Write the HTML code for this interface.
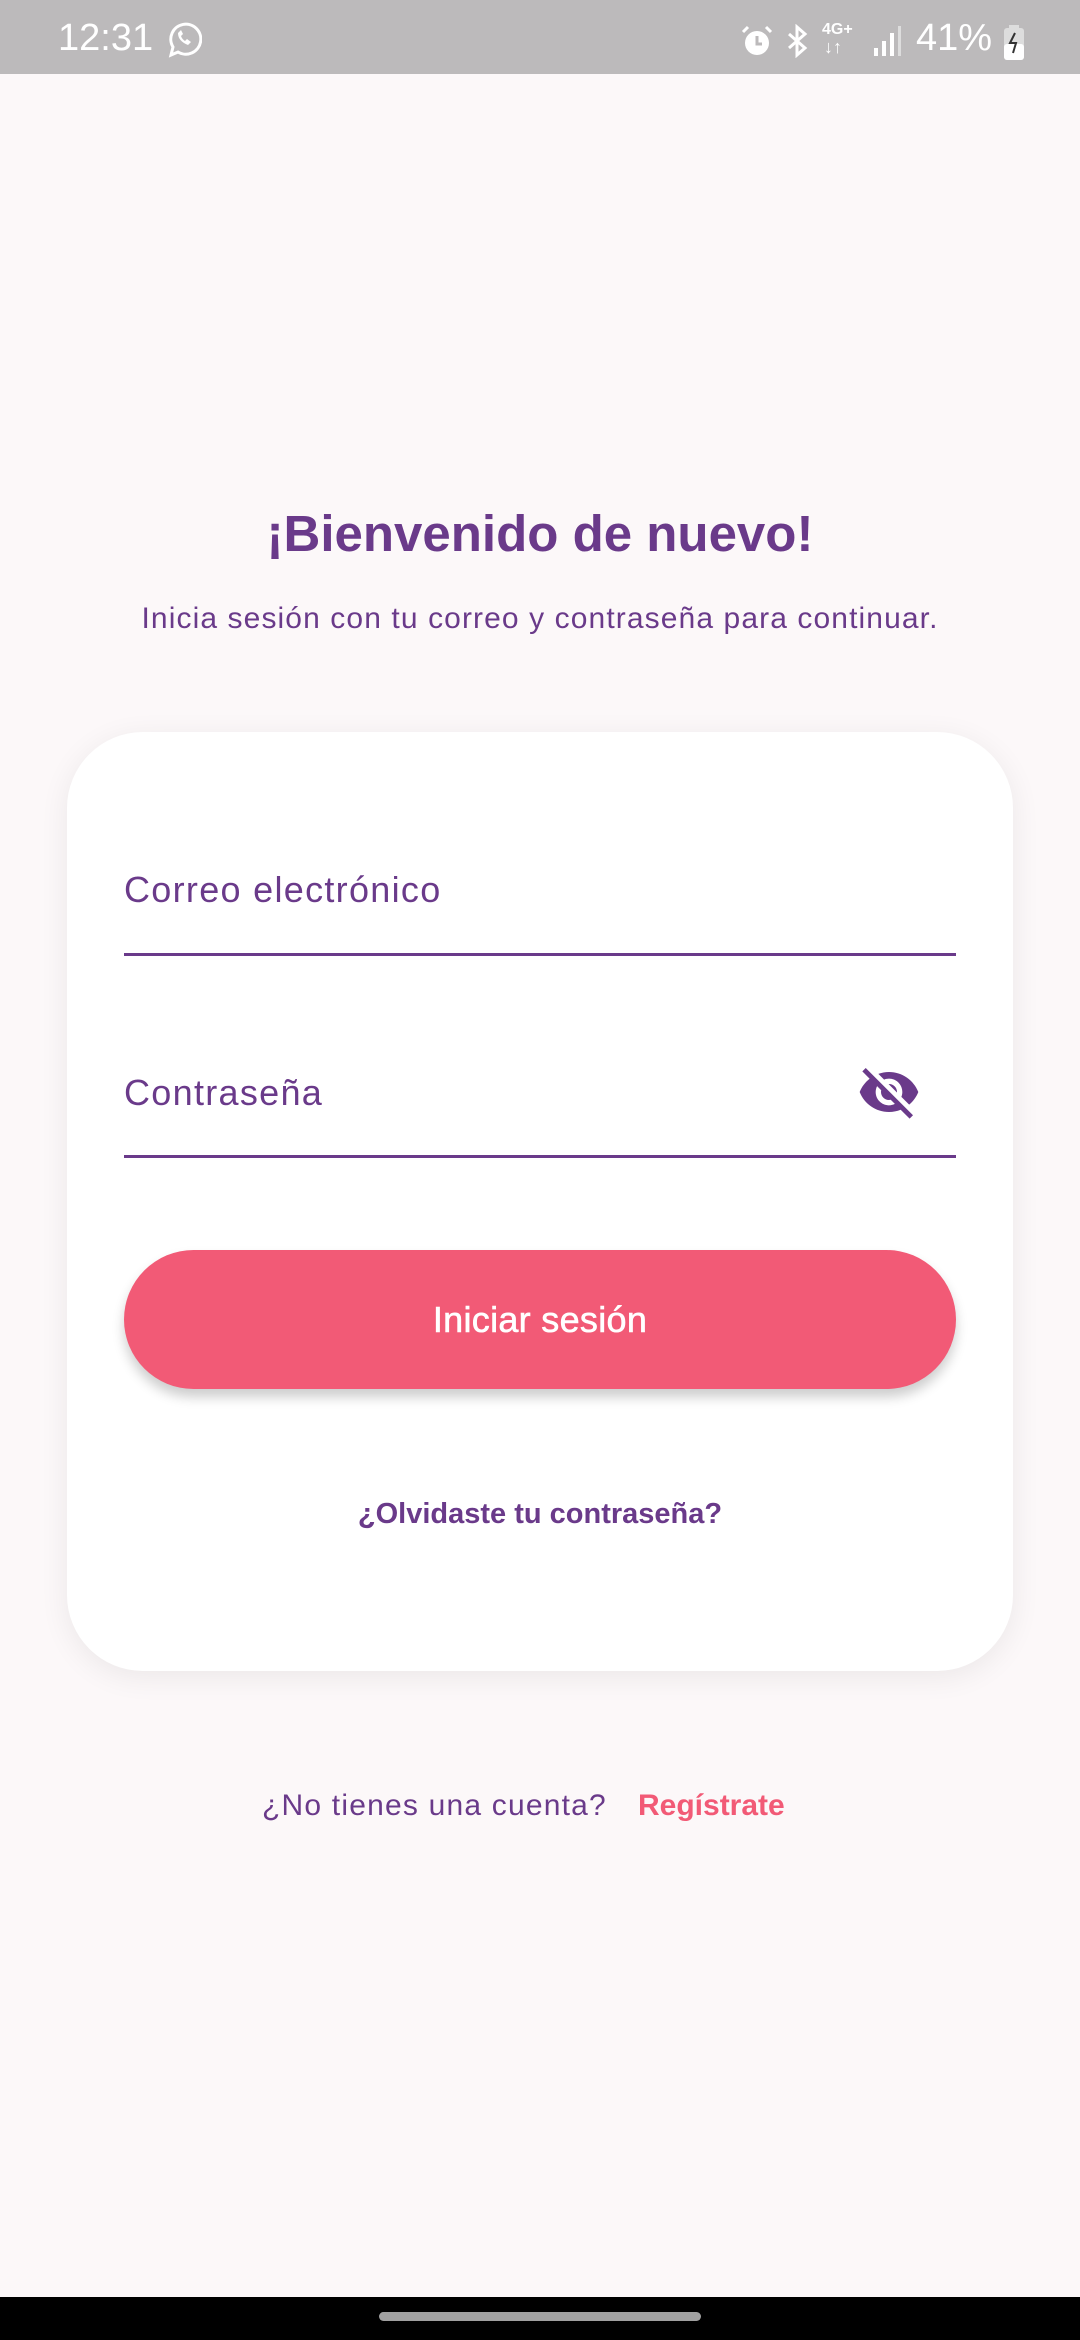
<!DOCTYPE html>
<html><head><meta charset="utf-8"><style>
*{margin:0;padding:0;box-sizing:border-box}
body{width:1080px;height:2340px;background:#fcf8f9;font-family:"Liberation Sans",Roboto,sans-serif;position:relative;overflow:hidden;color:#6a3a8a}
.sb{position:absolute;left:0;top:0;width:1080px;height:74px;background:#bcbabb;color:#fff}
.abs{position:absolute}
.c{position:absolute;left:0;width:1080px;text-align:center;white-space:nowrap}
.card{position:absolute;left:67px;top:732px;width:946px;height:939px;background:#fff;border-radius:76px;box-shadow:0 6px 30px rgba(0,0,0,0.07)}
.line{position:absolute;left:124px;width:832px;height:3px;background:#6a3a8a}
.lbl{position:absolute;left:124px;font-size:36px;letter-spacing:1.3px;line-height:40px;white-space:nowrap}
.btn{position:absolute;left:124px;top:1250px;width:832px;height:139px;border-radius:70px;background:#f25a76;box-shadow:0 8px 12px rgba(0,0,0,0.2);color:#fff;font-size:36px;text-align:center;line-height:139px;-webkit-text-stroke:0.6px #fff;letter-spacing:0.3px}
</style></head><body>
<div class="sb">
<div class="abs" style="left:58px;top:18px;font-size:38px;line-height:40px">12:31</div>
<svg class="abs" style="left:166px;top:21px" width="36" height="38" viewBox="0 0 36 38"><path d="M5 34 L7 26 A15 15 0 1 1 12 31 Z" fill="none" stroke="#fff" stroke-width="3"/><path d="M12 12 q0 8 10 12 l3-3 -4-3 -2 2 q-3-2-4-5 l2-2 -2-4z" fill="#fff"/></svg>
<svg class="abs" style="left:740px;top:24px" width="34" height="34" viewBox="0 0 34 34"><circle cx="17" cy="19" r="12" fill="#fff"/><path d="M17 12v8h5" stroke="#bcbabb" stroke-width="3" fill="none"/><path d="M3 8l5-5M31 8l-5-5" stroke="#fff" stroke-width="3"/></svg>
<svg class="abs" style="left:784px;top:24px" width="26" height="34" viewBox="0 0 26 34"><path d="M5 10l16 14-8 7V3l8 7-16 14" stroke="#fff" stroke-width="3" fill="none"/></svg>
<div class="abs" style="left:822px;top:22px;font-size:16px;line-height:16px;font-weight:bold">4G+</div>
<div class="abs" style="left:824px;top:38px;font-size:18px;line-height:18px">↓↑</div>
<svg class="abs" style="left:872px;top:24px" width="30" height="34" viewBox="0 0 30 34"><rect x="2" y="24" width="4" height="8" fill="#fff"/><rect x="10" y="17" width="4" height="15" fill="#fff"/><rect x="18" y="9" width="4" height="23" fill="#fff"/><rect x="26" y="2" width="3" height="30" fill="#ddd"/></svg>
<div class="abs" style="left:916px;top:18px;font-size:38px;line-height:40px">41%</div>
<svg class="abs" style="left:1002px;top:24px" width="24" height="36" viewBox="0 0 24 36"><rect x="7" y="1" width="10" height="4" fill="#ddd"/><rect x="2" y="4" width="20" height="32" rx="3" fill="#ddd"/><rect x="2" y="20" width="20" height="16" rx="3" fill="#fff"/><path d="M13 9l-5 10h6l-3 10" stroke="#333" stroke-width="2" fill="none"/></svg>
</div>

<div class="c" style="top:504px;font-size:51px;font-weight:bold;line-height:60px">¡Bienvenido de nuevo!</div>
<div class="c" style="top:601px;font-size:30px;line-height:36px;letter-spacing:1.1px">Inicia sesión con tu correo y contraseña para continuar.</div>

<div class="card"></div>
<div class="lbl" style="top:870px">Correo electrónico</div>
<div class="line" style="top:953px"></div>
<div class="lbl" style="top:1073px">Contraseña</div>
<svg class="abs" style="left:854px;top:1060px" width="70" height="64" viewBox="0 0 24 24"><path fill="#6a3a8a" d="M12 7c2.76 0 5 2.240 5 5 0 .65-.13 1.26-.36 1.83l2.92 2.92c1.51-1.26 2.7-2.89 3.430-4.75-1.730-4.39-6-7.5-11-7.5-1.4 0-2.74.25-3.98.7l2.16 2.16C10.74 7.13 11.35 7 12 7zM2 4.27l2.28 2.28.46.46C3.08 8.3 1.78 10.02 1 12c1.73 4.39 6 7.5 11 7.5 1.55 0 3.03-.3 4.38-.84l.42.42L19.73 22 21 20.73 3.27 3 2 4.27zM7.53 9.8l1.55 1.55c-.05.21-.08.43-.08.65 0 1.66 1.34 3 3 3 .22 0 .44-.03.65-.08l1.55 1.55c-.67.33-1.41.53-2.2.53-2.76 0-5-2.24-5-5 0-.79.2-1.53.53-2.2zm4.31-.78l3.15 3.150.02-.16c0-1.66-1.34-3-3-3l-.17.01z"/></svg>
<div class="line" style="top:1155px"></div>
<div class="btn">Iniciar sesión</div>
<div class="c" style="top:1496px;font-size:29px;font-weight:bold;line-height:36px">¿Olvidaste tu contraseña?</div>
<div class="abs" style="left:262px;top:1788px;font-size:30px;line-height:36px;letter-spacing:1.2px;white-space:nowrap">¿No tienes una cuenta?</div>
<div class="abs" style="left:638px;top:1788px;font-size:30px;line-height:36px;font-weight:bold;color:#f25a76;white-space:nowrap">Regístrate</div>

<div class="abs" style="left:0;top:2297px;width:1080px;height:43px;background:#000"></div>
<div class="abs" style="left:379px;top:2312px;width:322px;height:9px;border-radius:5px;background:#a0a0a0"></div>
</body></html>
